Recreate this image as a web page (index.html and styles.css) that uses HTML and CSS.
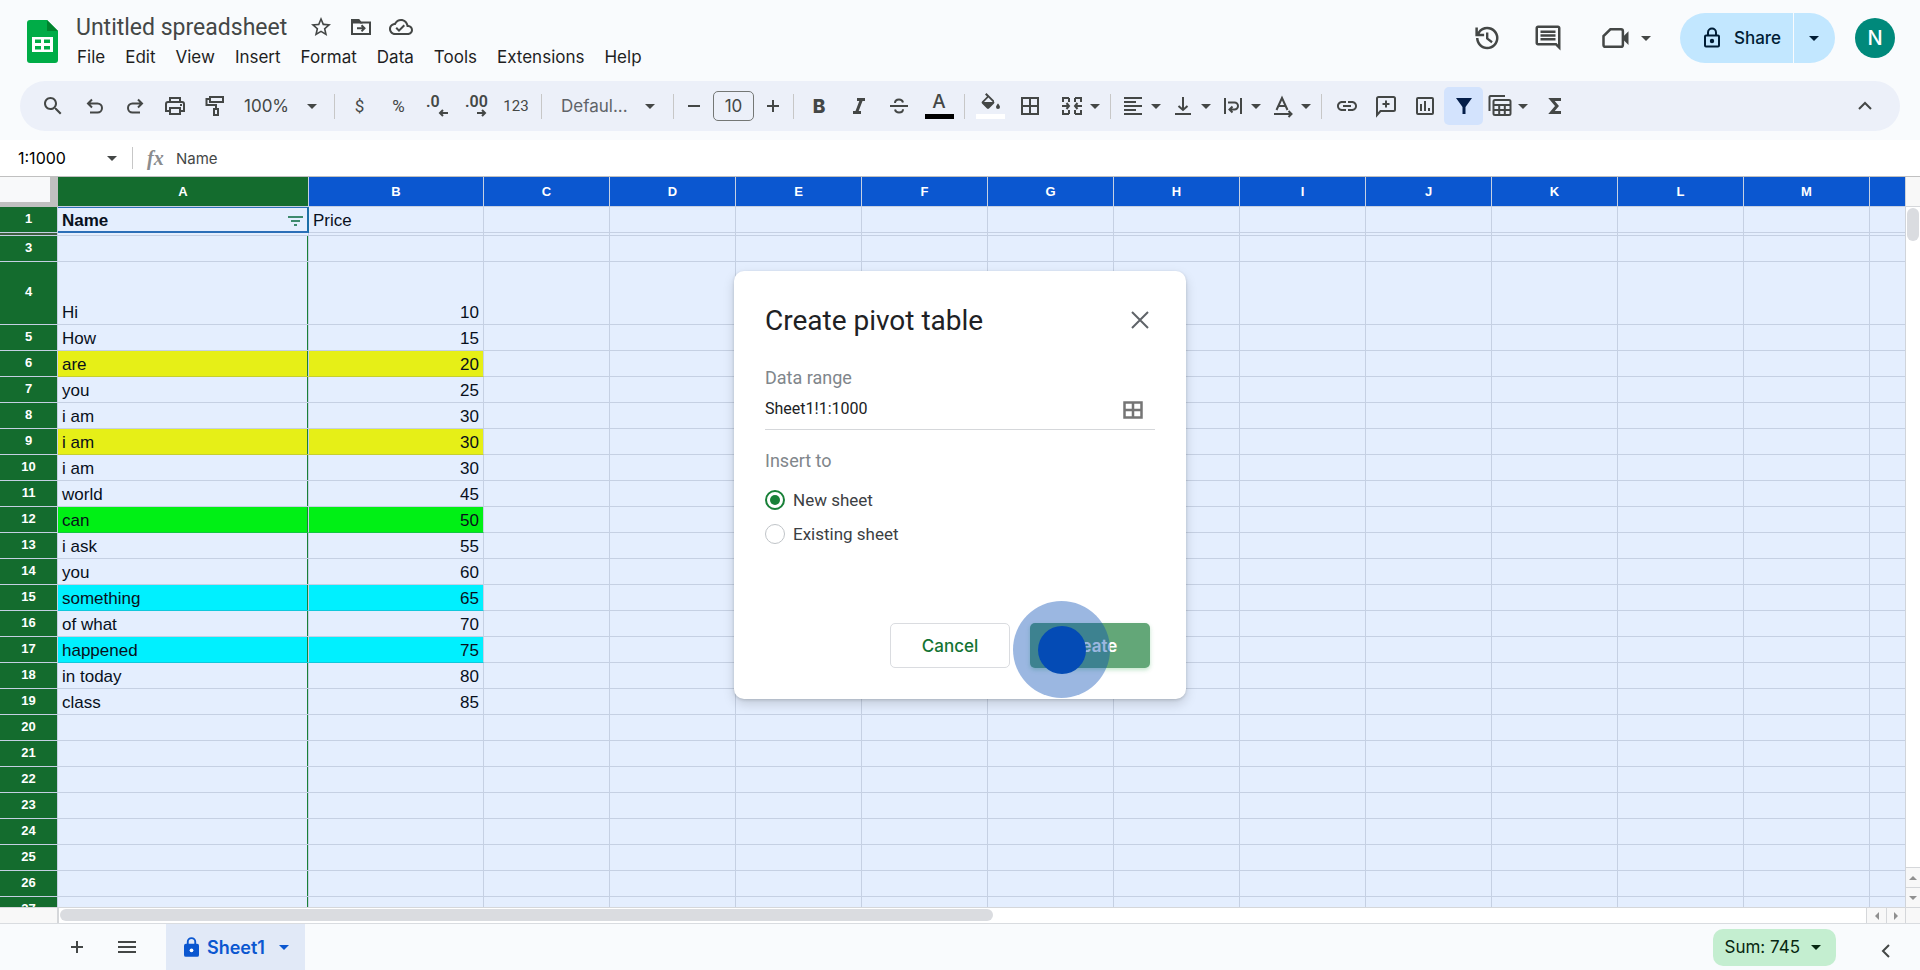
FILE: index.html
```html
<!DOCTYPE html>
<html lang="en">
  <head>
    <meta charset="UTF-8" />
    <meta name="viewport" content="width=device-width, initial-scale=1.0" />
    <title>Untitled spreadsheet</title>
    <link rel="stylesheet" href="styles.css">
  </head>
  <body>
    <!-- shared icons -->
    <svg class="defs" width="0" height="0" aria-hidden="true">
      <symbol id="caret" viewBox="0 0 10 5"><path d="M0 0h10L5 5z" fill="currentColor" /></symbol>
    </svg>

    <!-- header -->
    <header class="header">
      <svg class="logo" viewBox="0 0 31 43">
        <path d="M3 0h17l11 11v29a3 3 0 0 1-3 3H3a3 3 0 0 1-3-3V3a3 3 0 0 1 3-3z" fill="#00ac47" />
        <path d="M20 0l11 11H20z" fill="#00832d" />
        <path d="M5 17h21v15H5zM8 19.500v3.500h6v-3.500zM17 19.500v3.500h6v-3.500zM8 26v3.500h6V26zM17 26v3.500h6V26z" fill="#fff" fill-rule="evenodd" />
      </svg>
      <div class="doc">
        <div class="doc-title">
          <h1>Untitled spreadsheet</h1>
          <button class="icon-btn" aria-label="Star">
            <svg viewBox="0 0 24 24"><path d="M22 9.240l-7.190-.62L12 2 9.190 8.630 2 9.240l5.460 4.730L5.820 21 12 17.270 18.180 21l-1.630-7.030L22 9.240zM12 15.400l-3.760 2.270 1-4.280-3.320-2.880 4.380-.38L12 6.100l1.710 4.040 4.380.38-3.320 2.880 1 4.280L12 15.400z" fill="currentColor" /></svg>
          </button>
          <button class="icon-btn" aria-label="Move">
            <svg viewBox="0 0 24 24" class="line"><path d="M3 5h6.500l2 2.500H21V19H3zM8 13.300h7M12.500 10.200l3 3.100-3 3.100" /><path d="M3 5h6.500l2 2.500H3z" fill="currentColor" /></svg>
          </button>
          <button class="icon-btn" aria-label="Saved to Drive">
            <svg viewBox="0 0 24 24"><path d="M19.350 10.040C18.670 6.590 15.640 4 12 4 9.110 4 6.600 5.640 5.350 8.040 2.340 8.360 0 10.910 0 14c0 3.310 2.690 6 6 6h13c2.760 0 5-2.240 5-5 0-2.640-2.050-4.780-4.650-4.960zM19 18H6c-2.210 0-4-1.790-4-4 0-2.050 1.530-3.760 3.560-3.970l1.070-.11.5-.95C8.080 7.140 9.940 6 12 6c2.620 0 4.880 1.860 5.390 4.430l.3 1.500 1.530.11c1.560.1 2.780 1.410 2.780 2.960 0 1.650-1.350 3-3 3zm-9-3.820l-2.090-2.090L6.500 13.500 10 17l6.010-6.010-1.410-1.410z" fill="currentColor" /></svg>
          </button>
        </div>
        <nav class="menu">
          <a href="#">File</a>
          <a href="#">Edit</a>
          <a href="#">View</a>
          <a href="#">Insert</a>
          <a href="#">Format</a>
          <a href="#">Data</a>
          <a href="#">Tools</a>
          <a href="#">Extensions</a>
          <a href="#">Help</a>
        </nav>
      </div>

      <div class="actions">
        <button class="action" aria-label="Version history">
          <svg viewBox="0 0 24 24"><path d="M13 3a9 9 0 0 0-7.500 4.050V3.500h-2V10.500h7v-2H6.940A7 7 0 1 1 6 12H4a9 9 0 1 0 9-9zM12 7.500v5.200l4.300 3.400 1.100-1.500-3.500-2.700V7.500z" fill="currentColor" /></svg>
        </button>
        <button class="action" aria-label="Comments">
          <svg viewBox="0 0 24 24"><path d="M21.990 4c0-1.100-.89-2-1.990-2H4c-1.100 0-2 .9-2 2v12c0 1.100.9 2 2 2h14l4 4-.01-18zM20 4v13.170L18.830 16H4V4h16zM6 12h12v2H6zm0-3h12v2H6zm0-3h12v2H6z" fill="currentColor" /></svg>
        </button>
        <button class="action meet" aria-label="Join a call">
          <svg viewBox="0 0 24 24" class="line"><path d="M7.500 5H16a1.500 1.500 0 0 1 1.500 1.500v11A1.500 1.500 0 0 1 16 19H3.500A1.500 1.500 0 0 1 2 17.500V10.500z" /><path d="M18 10.500l4-4v11l-4-4z" fill="currentColor" stroke="none" /></svg>
          <svg class="caret"><use href="#caret" /></svg>
        </button>
        <div class="share">
          <button class="share-main">
            <svg viewBox="0 0 24 24" class="line"><rect x="5" y="9.500" width="14" height="11" rx="1" /><path d="M8 9V6.500a4 4 0 0 1 8 0V9" /><circle cx="12" cy="15" r="1.200" fill="currentColor" /></svg>
            Share
          </button>
          <button class="share-more" aria-label="Quick sharing actions"><svg class="caret"><use href="#caret" /></svg></button>
        </div>
        <button class="avatar">N</button>
      </div>
    </header>

    <!-- toolbar -->
    <div class="toolbar">
      <button class="tool wide" aria-label="Search the menus">
        <svg viewBox="0 0 24 24"><path d="M15.500 14h-.79l-.28-.27C15.410 12.590 16 11.110 16 9.500 16 5.910 13.090 3 9.500 3S3 5.910 3 9.500 5.910 16 9.500 16c1.610 0 3.090-.59 4.230-1.570l.27.28v.79l5 4.990L20.490 19l-4.990-5zm-6 0C7.010 14 5 11.990 5 9.500S7.010 5 9.500 5 14 7.010 14 9.500 11.990 14 9.500 14z" fill="currentColor" /></svg>
      </button>
      <button class="tool" aria-label="Undo"><svg viewBox="0 0 24 24" class="line"><path d="M9 5.500L5 9.500l4 4M5 9.500h9.500a4.500 4.500 0 0 1 0 9H7" /></svg></button>
      <button class="tool" aria-label="Redo"><svg viewBox="0 0 24 24" class="line"><path d="M15 5.500l4 4-4 4M19 9.500H9.500a4.500 4.500 0 0 0 0 9H17" /></svg></button>
      <button class="tool" aria-label="Print"><svg viewBox="0 0 24 24" class="line"><path d="M7 8V4h10v4M7 17H3v-7a2 2 0 0 1 2-2h14a2 2 0 0 1 2 2v7h-4M7 14h10v6H7zM17 11h2" /></svg></button>
      <button class="tool" aria-label="Paint format"><svg viewBox="0 0 24 24" class="line"><path d="M7 3h13v5H7zM7 5H3.500v6H13v4M11 15h4v6h-4z" /></svg></button>
      <label class="picker zoom">
        <select aria-label="Zoom"><option>100%</option><option>75%</option></select>
        <svg class="caret"><use href="#caret" /></svg>
      </label>
      <span class="sep"></span>
      <button class="tool slim sign">$</button>
      <button class="tool slim sign">%</button>
      <button class="tool slim decimal" aria-label="Decrease decimal places">.0<svg viewBox="0 0 10 8" class="line"><path d="M10 4H2M5 1L2 4l3 3" /></svg></button>
      <button class="tool slim decimal" aria-label="Increase decimal places">.00<svg viewBox="0 0 10 8" class="line"><path d="M0 4h8M5 1l3 3-3 3" /></svg></button>
      <button class="tool sign small">123</button>
      <span class="sep"></span>
      <label class="picker font">
        <select aria-label="Font"><option>Defaul...</option><option>Arial</option></select>
        <svg class="caret"><use href="#caret" /></svg>
      </label>
      <span class="sep"></span>
      <button class="tool step" aria-label="Decrease font size"><svg viewBox="0 0 24 24" class="line"><path d="M6 12h12" /></svg></button>
      <input class="size" type="text" value="10" aria-label="Font size" />
      <button class="tool step" aria-label="Increase font size"><svg viewBox="0 0 24 24" class="line"><path d="M6 12h12M12 6v12" /></svg></button>
      <span class="sep"></span>
      <button class="tool letter bold">B</button>
      <button class="tool" aria-label="Italic"><svg viewBox="0 0 24 24" class="line heavy"><path d="M10 5.500h8M6 18.500h8M14.500 5.500l-5 13" /></svg></button>
      <button class="tool" aria-label="Strikethrough"><svg viewBox="0 0 24 24" class="line"><path d="M3 12h18M16 8.500C15.500 6.500 14 5.500 12 5.500S8 6.500 8 9M8 15.500c.5 2 2 3 4 3s4-1 4-3.200" /></svg></button>
      <button class="tool letter swatch text-color">A</button>
      <span class="sep"></span>
      <button class="tool swatch fill-color" aria-label="Fill color"><svg viewBox="0 0 24 24"><path d="M16 10.500L8.500 3 7 4.500l2 2-5 5a1.500 1.500 0 0 0 0 2l5 5a1.500 1.500 0 0 0 2 0l5-5a1.500 1.500 0 0 0 0-2zM6 12l4.400-4.400L14.800 12zM20 13.500s-2 2.200-2 3.500a2 2 0 0 0 4 0c0-1.300-2-3.500-2-3.500z" fill="currentColor" /></svg></button>
      <button class="tool" aria-label="Borders"><svg viewBox="0 0 24 24" class="line"><path d="M4 4h16v16H4zM4 12h16M12 4v16" /></svg></button>
      <button class="tool drop merge" aria-label="Merge cells"><svg viewBox="0 0 24 24" class="line"><path d="M9 4H3v4M9 20H3v-4M15 4h6v4M15 20h6v-4M9 4v4M9 20v-4M15 4v4M15 20v-4M2 12h7M6.500 9L9 12l-2.500 3M22 12h-7M17.500 9L15 12l2.500 3" /></svg><svg class="caret"><use href="#caret" /></svg></button>
      <span class="sep"></span>
      <button class="tool drop" aria-label="Horizontal align"><svg viewBox="0 0 24 24" class="line"><path d="M3 4h18M3 8h12M3 12h18M3 16h12M3 20h18" /></svg><svg class="caret"><use href="#caret" /></svg></button>
      <button class="tool drop" aria-label="Vertical align"><svg viewBox="0 0 24 24" class="line"><path d="M12 3v13M7.500 12l4.500 4 4.500-4M4 20h16" /></svg><svg class="caret"><use href="#caret" /></svg></button>
      <button class="tool drop" aria-label="Text wrapping"><svg viewBox="0 0 24 24" class="line"><path d="M4 4v16M20 4v16M7 8.500h6.500a3.500 3.500 0 0 1 0 7H9M11.500 12.500l-3 3 3 3" /></svg><svg class="caret"><use href="#caret" /></svg></button>
      <button class="tool drop" aria-label="Text rotation"><svg viewBox="0 0 24 24" class="line"><path d="M5.500 16L11 4l5.500 12M7.500 12h7M3 20h17M17.500 17l3 3-3 3" /></svg><svg class="caret"><use href="#caret" /></svg></button>
      <span class="sep"></span>
      <button class="tool slim" aria-label="Insert link"><svg viewBox="0 0 24 24"><path d="M3.900 12c0-1.710 1.390-3.100 3.100-3.100h4V7H7c-2.760 0-5 2.240-5 5s2.240 5 5 5h4v-1.900H7c-1.710 0-3.100-1.390-3.100-3.100zM8 13h8v-2H8v2zm9-6h-4v1.900h4c1.710 0 3.100 1.390 3.100 3.100s-1.390 3.100-3.100 3.100h-4V17h4c2.760 0 5-2.240 5-5s-2.240-5-5-5z" fill="currentColor" /></svg></button>
      <button class="tool slim" aria-label="Insert comment"><svg viewBox="0 0 24 24" class="line"><path d="M3 21V4.500A1.500 1.500 0 0 1 4.500 3h15A1.500 1.500 0 0 1 21 4.500v11a1.500 1.500 0 0 1-1.500 1.500H6.500zM12 6.500v7M8.500 10h7" /></svg></button>
      <button class="tool slim" aria-label="Insert chart"><svg viewBox="0 0 24 24" class="line"><rect x="4" y="4" width="16" height="16" rx="1" /><path d="M8 10v7M12 7v10M16 14v3" /></svg></button>
      <button class="tool slim active" aria-label="Remove filter"><svg viewBox="0 0 24 24"><path d="M4 4h16l-6.500 9v7h-3v-7z" fill="currentColor" /></svg></button>
      <button class="tool drop" aria-label="Filter views"><svg viewBox="0 0 24 24" class="line"><path d="M1.500 17V3a1 1 0 0 1 1-1H17" /><rect x="5.500" y="6" width="17" height="15" rx="1.500" /><path d="M5.500 11h17M5.500 16h17M11.200 11v10M16.800 11v10" /></svg><svg class="caret"><use href="#caret" /></svg></button>
      <button class="tool wide" aria-label="Functions"><svg viewBox="0 0 24 24" class="line heavy"><path d="M18 5.500H8.500L14 12l-5.500 6.500H18" /></svg></button>
      <button class="tool collapse" aria-label="Hide the menus"><svg viewBox="0 0 24 24" class="line"><path d="M6 15l6-6 6 6" /></svg></button>
    </div>

    <!-- formula bar -->
    <div class="formula-bar">
      <label class="name-box">
        <input type="text" value="1:1000" aria-label="Name box" />
        <svg class="caret"><use href="#caret" /></svg>
      </label>
      <label class="fx" for="formula">fx</label>
      <input class="formula" id="formula" type="text" value="Name" />
    </div>

    <!-- grid -->
    <main class="sheet">
      <div class="grid">
        <table>
          <colgroup id="cols"></colgroup>
          <thead><tr id="letters"></tr></thead>
          <tbody id="rows"></tbody>
        </table>
      </div>
      <div class="vscroll">
        <div class="vscroll-head"></div>
        <div class="vscroll-track"><div class="vthumb"></div></div>
        <button class="arrow up" aria-label="Scroll up"></button>
        <button class="arrow down" aria-label="Scroll down"></button>
      </div>
    </main>
    <div class="hscroll">
      <div class="hscroll-head"></div>
      <div class="hscroll-track"><div class="hthumb"></div></div>
      <button class="arrow left" aria-label="Scroll left"></button>
      <button class="arrow right" aria-label="Scroll right"></button>
      <div class="hscroll-end"></div>
    </div>

    <!-- sheet tabs -->
    <footer class="tabs">
      <button class="tab-btn" aria-label="Add sheet"><svg viewBox="0 0 24 24" class="line"><path d="M6 12h12M12 6v12" /></svg></button>
      <button class="tab-btn" aria-label="All sheets"><svg viewBox="0 0 24 24" class="line"><path d="M3 7h18M3 12h18M3 17h18" /></svg></button>
      <button class="tab">
        <svg class="lock" viewBox="0 0 16 22"><path d="M4 8V5.500a4 4 0 0 1 8 0V8" fill="none" stroke="currentColor" stroke-width="2" /><rect y="7.500" width="16" height="14" rx="2" fill="currentColor" /><circle cx="8" cy="14.500" r="2" fill="#fff" /></svg>
        Sheet1
        <svg class="caret"><use href="#caret" /></svg>
      </button>
      <button class="sum">Sum: 745 <svg class="caret"><use href="#caret" /></svg></button>
      <button class="side" aria-label="Show side panel"><svg viewBox="0 0 24 24" class="line"><path d="M15 6l-6 6 6 6" /></svg></button>
    </footer>

    <!-- pivot dialog -->
    <div class="overlay">
      <form class="dialog" role="dialog" aria-labelledby="dialog-title">
        <div class="dialog-head">
          <h2 id="dialog-title">Create pivot table</h2>
          <button type="button" class="close" aria-label="Close"><svg viewBox="0 0 24 24" class="line"><path d="M4 4l16 16M20 4L4 20" /></svg></button>
        </div>
        <label class="field-label" for="range">Data range</label>
        <div class="range">
          <input type="text" id="range" value="Sheet1!1:1000" />
          <button type="button" class="pick" aria-label="Select data range"><svg viewBox="0 0 20 18"><path d="M1.500 1.500h17v15h-17zM1.500 9h17M10 1.500v15" fill="none" stroke="currentColor" stroke-width="2.500" /></svg></button>
        </div>
        <p class="field-label">Insert to</p>
        <label class="option"><input type="radio" name="target" checked /> New sheet</label>
        <label class="option"><input type="radio" name="target" /> Existing sheet</label>
        <div class="dialog-actions">
          <button type="button" class="cancel">Cancel</button>
          <div class="create-wrap">
            <button type="button" class="create">Create</button>
            <span class="pointer"></span>
          </div>
        </div>
      </form>
    </div>

    <script src="script.js"></script>
  </body>
</html>
```
FILE: styles.css
```css
* {
  box-sizing: border-box;
}

body {
  margin: 0;
  height: 100vh;
  display: flex;
  flex-direction: column;
  overflow: hidden;
  background-color: #f9fbfd;
  color: #1f1f1f;
  font-family: Inter, "Liberation Sans", sans-serif;
}

button,
input,
select {
  font: inherit;
  color: inherit;
  background: none;
  border: 0;
  padding: 0;
  margin: 0;
  outline: none;
}

h1,
h2,
p {
  margin: 0;
  font-weight: 400;
}

svg {
  display: block;
  flex: none;
}

.defs {
  position: absolute;
}

.line {
  fill: none;
  stroke: currentColor;
  stroke-width: 2;
}

.heavy {
  stroke-width: 3;
}

.caret {
  width: 10px;
  height: 5px;
}

/* header */
.header {
  display: flex;
  height: 81px;
  padding: 13px 25px 0 27px;
  color: #444746;
}

.logo {
  width: 31px;
  height: 43px;
  margin: 7px 18px 0 0;
}

.doc-title {
  display: flex;
  align-items: center;
  height: 28px;
}

.doc-title h1 {
  font-family: Roboto, sans-serif;
  font-size: 23px;
  margin-right: 22px;
}

.icon-btn {
  margin-right: 16px;
}

.icon-btn svg {
  width: 24px;
  height: 24px;
}

.menu {
  display: flex;
  gap: 20px;
  padding: 4px 0 0 1px;
}

.menu a {
  color: #1f1f1f;
  font-size: 17px;
  line-height: 24px;
  text-decoration: none;
}

.actions {
  display: flex;
  align-items: center;
  height: 50px;
  margin-left: auto;
}

.action {
  display: flex;
  align-items: center;
  gap: 10px;
  margin-right: 32px;
}

.action svg:first-child {
  width: 30px;
  height: 30px;
}

.meet {
  margin: 0 29px 0 6px;
}

.share {
  display: flex;
  height: 50px;
  margin-right: 20px;
  color: #001d35;
}

.share button {
  display: flex;
  align-items: center;
  background-color: #c2e7ff;
}

.share-main {
  gap: 10px;
  width: 113px;
  padding-left: 20px;
  border-radius: 25px 0 0 25px;
  font-size: 17px;
  font-weight: 500;
}

.share-main svg {
  width: 24px;
  height: 24px;
}

.share-more {
  width: 41px;
  margin-left: 1px;
  padding-left: 15px;
  border-radius: 0 25px 25px 0;
}

.avatar {
  width: 40px;
  height: 40px;
  border-radius: 50%;
  background-color: #00897b;
  color: white;
  font-size: 20px;
  font-weight: 500;
}

/* toolbar */
.toolbar {
  display: flex;
  align-items: center;
  height: 50px;
  margin: 0 20px 9px;
  padding: 0 15px 0 11px;
  border-radius: 25px;
  background-color: #ecf0f9;
  color: #444746;
}

.tool {
  display: flex;
  align-items: center;
  justify-content: center;
  width: 40px;
  height: 38px;
  flex: none;
}

.tool svg:first-child {
  width: 24px;
  height: 24px;
}

.tool.wide {
  width: 44px;
}

.tool.slim {
  width: 39px;
}

.tool.step {
  width: 30px;
}

.tool.drop {
  width: 50px;
  gap: 6px;
}

.tool.merge {
  width: 55px;
  padding-left: 4px;
}

.tool.active {
  background-color: #d3e3fd;
  border-radius: 5px;
  color: #041e49;
}

.sep {
  width: 1px;
  height: 25px;
  margin: 0 5px;
  background-color: #c7c7c7;
}

.sign {
  font-family: Roboto, sans-serif;
  font-size: 17px;
}

.sign.small {
  font-size: 15px;
}

.tool.decimal {
  position: relative;
  justify-content: flex-start;
  align-items: flex-start;
  padding: 5px 0 0 8px;
  font-family: Roboto, sans-serif;
  font-size: 16px;
  line-height: 20px;
  font-weight: 600;
}

.tool.decimal svg {
  position: absolute;
  right: 9px;
  bottom: 8px;
  width: 10px;
  height: 8px;
}

.picker {
  display: flex;
  align-items: center;
}

.picker select {
  appearance: none;
  flex: 1;
  min-width: 0;
}

.zoom {
  width: 94px;
  padding: 0 12px 0 9px;
  font-size: 17px;
}

.font {
  width: 121px;
  padding: 0 13px 0 14px;
  color: #5f6368;
  font-size: 17px;
}

.font .caret {
  color: #444746;
}

.size {
  width: 41px;
  height: 30px;
  margin: 0 4px;
  border: 1px solid #747775;
  border-radius: 5px;
  text-align: center;
  font-size: 17px;
}

.letter {
  font-size: 19px;
  font-weight: 500;
}

.letter.bold {
  font-weight: 800;
}

.swatch {
  flex-direction: column;
  justify-content: flex-end;
  line-height: 24px;
  padding-bottom: 6px;
}

.swatch::after {
  content: "";
  width: 29px;
  height: 5px;
  background-color: black;
}

.fill-color::after {
  background-color: white;
}

.collapse {
  margin-left: auto;
}

/* formula bar */
.formula-bar {
  display: flex;
  align-items: center;
  height: 37px;
  border-bottom: 1px solid #c0c0c0;
  background-color: white;
  color: #444746;
  font-size: 16px;
}

.name-box {
  display: flex;
  align-items: center;
  width: 133px;
  height: 22px;
  padding: 0 15px 0 18px;
  border-right: 1px solid #c7c7c7;
}

.name-box input {
  flex: 1;
  min-width: 0;
  color: #000;
}

.fx {
  width: 43px;
  padding-left: 14px;
  color: #8a8c8e;
  font-family: "Liberation Serif", serif;
  font-size: 20px;
  font-style: italic;
  font-weight: 700;
}

.formula {
  flex: 1;
  font-size: 15px;
}

/* grid */
.sheet {
  display: flex;
  flex: 1;
  min-height: 0;
}

.grid {
  flex: 1;
  min-width: 0;
  overflow: hidden;
  border-right: 1px solid #d0d4da;
  background-color: #e4eefe;
}

table {
  table-layout: fixed;
  width: 0;
  border-collapse: separate;
  border-spacing: 0;
  font-family: "Liberation Sans", Arial, sans-serif;
}

.col-head {
  width: 58px;
}

.col-a {
  width: 251px;
}

.col-b {
  width: 175px;
}

.col {
  width: 126px;
}

th,
td {
  overflow: hidden;
  padding: 0 4px;
  border-right: 1px solid #c5d0e3;
  border-bottom: 1px solid #c5d0e3;
  white-space: nowrap;
}

thead th {
  height: 30px;
  background-color: #0b57d0;
  color: white;
  font-size: 13px;
}

thead .name-col,
tbody th {
  background-color: #146c2e;
}

thead .corner {
  border-right: 8px solid #c0c0c0;
  border-bottom: 5px solid #c0c0c0;
  background-color: #f8f9fa;
}

tbody th {
  padding-bottom: 2px;
  color: white;
  font-size: 13px;
  line-height: 16px;
}

tbody tr {
  height: 26px;
}

td {
  padding-bottom: 2px;
  color: #08101c;
  font-size: 17px;
  line-height: 19px;
  vertical-align: bottom;
}

/* edge of the filtered range */
td.name-col {
  box-shadow: inset -1px 0 #188038;
}

td.number {
  text-align: right;
}

tr.hidden-row {
  height: 3px;
}

tr.hidden-row th,
tr.hidden-row td {
  padding: 0;
  line-height: 0;
}

tr.hidden-row th {
  background-color: #3e5f3f;
}

tr.tall {
  height: 63px;
}

.selected {
  padding-bottom: 1px;
  border-right: 2px solid #1c6fa8;
  border-bottom: 2px solid #2b6fb8;
  box-shadow: inset 0 1px #2b6fb8;
  font-weight: 700;
}

.selected div {
  display: flex;
  align-items: center;
  justify-content: space-between;
}

.selected svg {
  width: 15px;
  height: 10px;
  color: #3d8a6e;
}

.yellow .fill {
  background-color: #e6ef17;
  border-bottom-color: #c6cf30;
}

.green .fill {
  background-color: #00f015;
  border-bottom-color: #10c840;
}

.cyan .fill {
  background-color: #00f0ff;
  border-bottom-color: #10c8dc;
}

/* scrollbars */
.vscroll {
  display: flex;
  flex-direction: column;
  width: 14px;
  background-color: white;
}

.vscroll-head {
  height: 30px;
  border-bottom: 1px solid #d5d7da;
  background-color: #f8f8f8;
}

.vscroll-track {
  flex: 1;
  padding: 1px;
}

.vthumb {
  height: 33px;
  border-radius: 6px;
  background-color: #dadce0;
}

.hscroll {
  display: flex;
  height: 16px;
  border-top: 1px solid #d5d7da;
  background-color: white;
}

.hscroll-head {
  width: 59px;
  border-right: 2px solid #d5d7da;
  background-color: #f8f8f8;
}

.hscroll-track {
  flex: 1;
  padding: 1px;
}

.hthumb {
  width: 933px;
  max-width: 52%;
  height: 12px;
  border-radius: 6px;
  background-color: #dadce0;
}

.hscroll-end {
  width: 14px;
  background-color: #f8f8f8;
}

.arrow {
  display: flex;
  align-items: center;
  justify-content: center;
  border: 0 solid #d5d7da;
  background-color: #f8f8f8;
}

.arrow::before {
  content: "";
  border: 4px solid transparent;
}

.up,
.down {
  height: 20px;
  border-top-width: 1px;
}

.left,
.right {
  width: 20px;
  border-left-width: 1px;
}

.right {
  border-right-width: 1px;
}

.up::before {
  border-top: 0;
  border-bottom-color: #909090;
}

.down::before {
  border-bottom: 0;
  border-top-color: #909090;
}

.left::before {
  border-left: 0;
  border-right-color: #909090;
}

.right::before {
  border-right: 0;
  border-left-color: #909090;
}

/* sheet tabs */
.tabs {
  display: flex;
  align-items: center;
  height: 47px;
  padding-left: 52px;
  border-top: 1px solid #d9dce0;
  color: #444746;
}

.tab-btn {
  width: 50px;
}

.tab-btn svg,
.side svg {
  width: 24px;
  height: 24px;
}

.tab {
  display: flex;
  align-items: center;
  gap: 8px;
  width: 139px;
  height: 46px;
  margin-left: 14px;
  padding-left: 18px;
  background-color: #e1e9f7;
  color: #0b57d0;
  font-size: 18px;
  font-weight: 600;
}

.tab .caret {
  margin-left: 6px;
}

.lock {
  width: 15px;
  height: 22px;
}

.sum {
  display: flex;
  align-items: center;
  gap: 11px;
  height: 37px;
  margin-left: auto;
  padding: 0 15px 0 12px;
  border-radius: 10px;
  background-color: #c4eed0;
  color: #072711;
  font-size: 17px;
}

.side {
  margin: 7px 22px 0 38px;
}

.tab-btn svg {
  margin-left: 13px;
}

/* pivot dialog */
.overlay {
  position: absolute;
  inset: 0;
  display: flex;
  align-items: center;
  justify-content: center;
}

.dialog {
  width: 452px;
  padding: 30px 31px 31px;
  border-radius: 10px;
  background-color: white;
  box-shadow: 0 5px 12px rgba(0, 0, 0, 0.15), 0 1px 3px rgba(60, 64, 67, 0.2);
  font-family: Roboto, sans-serif;
}

.dialog-head {
  display: flex;
  align-items: center;
  justify-content: space-between;
  height: 38px;
  margin-bottom: 27px;
  padding-right: 3px;
}

.dialog h2 {
  color: #202124;
  font-size: 28px;
}

.close svg {
  width: 24px;
  height: 24px;
  color: #5f6368;
}

.field-label {
  display: block;
  color: #80868b;
  font-size: 18px;
  line-height: 24px;
}

.range {
  display: flex;
  align-items: center;
  height: 40px;
  margin-bottom: 19px;
  padding-right: 12px;
  border-bottom: 1px solid #d5d7da;
}

.range input {
  flex: 1;
  min-width: 0;
  height: 40px;
  padding-bottom: 2px;
  color: #202124;
  font-size: 16px;
}

.pick svg {
  width: 20px;
  height: 18px;
  color: #757575;
}

.option {
  display: flex;
  align-items: center;
  gap: 8px;
  height: 34px;
  color: #3c4043;
  font-size: 17px;
}

.field-label + .option {
  margin-top: 10px;
}

.option input {
  appearance: none;
  display: flex;
  align-items: center;
  justify-content: center;
  width: 20px;
  height: 20px;
  border: 1px solid #c0c4c8;
  border-radius: 50%;
}

.option input:checked {
  border: 2px solid #188038;
}

.option input:checked::before {
  content: "";
  width: 10px;
  height: 10px;
  border-radius: 50%;
  background-color: #188038;
}

.dialog-actions {
  display: flex;
  justify-content: flex-end;
  gap: 20px;
  margin-top: 72px;
  padding-right: 5px;
  font-family: Inter, sans-serif;
  font-size: 17px;
  font-weight: 500;
}

.cancel,
.create {
  width: 120px;
  height: 45px;
  border-radius: 5px;
}

.cancel {
  border: 1px solid #dadce0;
  color: #137333;
}

.create-wrap {
  position: relative;
}

.create {
  background-color: #63a778;
  box-shadow: 0 2px 4px rgba(52, 168, 83, 0.3);
  color: white;
  font-weight: 600;
}

/* click marker */
.pointer {
  position: absolute;
  left: -17px;
  top: -22px;
  display: flex;
  align-items: center;
  justify-content: center;
  width: 97px;
  height: 97px;
  border-radius: 50%;
  background-color: rgba(4, 75, 181, 0.4);
}

.pointer::before {
  content: "";
  width: 48px;
  height: 48px;
  border-radius: 50%;
  background-color: #044bb5;
}
```
FILE: script.js
```js
const letters = "ABCDEFGHIJKLM".split("");

// row number -> [name, price, highlight]
const data = {
  4: ["Hi", 10],
  5: ["How", 15],
  6: ["are", 20, "yellow"],
  7: ["you", 25],
  8: ["i am", 30],
  9: ["i am", 30, "yellow"],
  10: ["i am", 30],
  11: ["world", 45],
  12: ["can", 50, "green"],
  13: ["i ask", 55],
  14: ["you", 60],
  15: ["something", 65, "cyan"],
  16: ["of what", 70],
  17: ["happened", 75, "cyan"],
  18: ["in today", 80],
  19: ["class", 85],
};

const filterIcon =
  '<svg viewBox="0 0 15 10" class="line"><path d="M0 1h15M3 5h9M6 9h3" /></svg>';

const colClass = { A: "col-a", B: "col-b" };
// one unlabelled column runs off the right edge
document.getElementById("cols").innerHTML =
  '<col class="col-head">' +
  letters.map((l) => `<col class="${colClass[l] || "col"}">`).join("") +
  '<col class="col">';

document.getElementById("letters").innerHTML =
  '<th class="corner"></th>' +
  letters
    .map((l) => `<th class="${l === "A" ? "name-col" : ""}">${l}</th>`)
    .join("") +
  "<th></th>";

const empty = "<td></td>".repeat(letters.length - 1);
let html = "";
for (let n = 1; n <= 27; n++) {
  const [name = "", price = "", color = ""] = data[n] || [];
  if (n === 1) {
    html += `<tr><th>1</th><td class="selected"><div>Name${filterIcon}</div></td><td>Price</td>${empty}</tr>`;
  } else if (n === 2) {
    // row 2 is filtered out
    html += `<tr class="hidden-row"><th></th><td></td><td></td>${empty}</tr>`;
  } else {
    html += `<tr class="${n === 4 ? "tall" : color}"><th>${n}</th><td class="name-col fill">${name}</td><td class="number fill">${price}</td>${empty}</tr>`;
  }
}
document.getElementById("rows").innerHTML = html;
```
